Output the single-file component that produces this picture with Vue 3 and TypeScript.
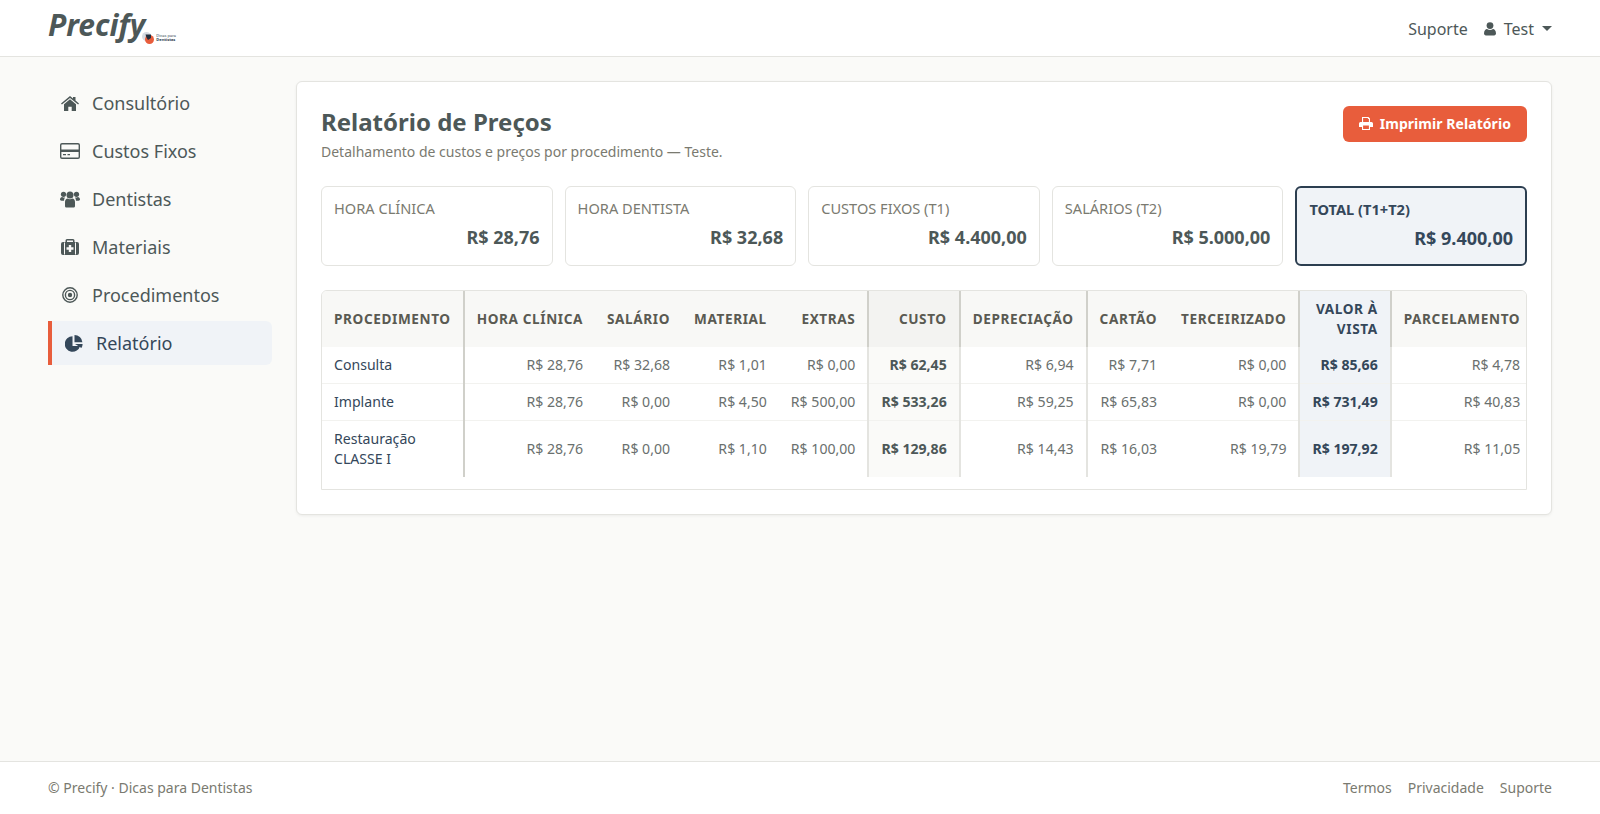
<script setup lang="ts">
interface Row {
  name: string[];
  values: string[];
}

const navItems = [
  { label: 'Consultório', icon: 'home' },
  { label: 'Custos Fixos', icon: 'card' },
  { label: 'Dentistas', icon: 'users' },
  { label: 'Materiais', icon: 'medkit' },
  { label: 'Procedimentos', icon: 'target' },
  { label: 'Relatório', icon: 'pie', active: true }
];

const stats = [
  { label: 'HORA CLÍNICA', value: 'R$ 28,76' },
  { label: 'HORA DENTISTA', value: 'R$ 32,68' },
  { label: 'CUSTOS FIXOS (T1)', value: 'R$ 4.400,00' },
  { label: 'SALÁRIOS (T2)', value: 'R$ 5.000,00' },
  { label: 'TOTAL (T1+T2)', value: 'R$ 9.400,00', total: true }
];

const rows: Row[] = [
  {
    name: ['Consulta'],
    values: ['R$ 28,76', 'R$ 32,68', 'R$ 1,01', 'R$ 0,00', 'R$ 62,45', 'R$ 6,94', 'R$ 7,71', 'R$ 0,00', 'R$ 85,66', 'R$ 4,78']
  },
  {
    name: ['Implante'],
    values: ['R$ 28,76', 'R$ 0,00', 'R$ 4,50', 'R$ 500,00', 'R$ 533,26', 'R$ 59,25', 'R$ 65,83', 'R$ 0,00', 'R$ 731,49', 'R$ 40,83']
  },
  {
    name: ['Restauração', 'CLASSE I'],
    values: ['R$ 28,76', 'R$ 0,00', 'R$ 1,10', 'R$ 100,00', 'R$ 129,86', 'R$ 14,43', 'R$ 16,03', 'R$ 19,79', 'R$ 197,92', 'R$ 11,05']
  }
];

const columns = ['HORA CLÍNICA', 'SALÁRIO', 'MATERIAL', 'EXTRAS', 'CUSTO', 'DEPRECIAÇÃO', 'CARTÃO', 'TERCEIRIZADO', 'VALOR À VISTA', 'PARCELAMENTO'];

// Per-column classes, index matches columns/values
const colClass = ['', '', '', '', 'col-cost', 'col-dep', 'col-card', '', 'col-cash', 'col-inst'];
</script>

<template>
  <div class="page">
    <header class="navbar">
      <div class="brand">
        <span class="brand-name">Precify</span>
        <span class="brand-sub">
          <svg class="brand-mark" viewBox="0 0 12 12">
            <circle cx="4.500" cy="4.500" r="4.500" fill="#d5dbe3" />
            <circle cx="7.500" cy="7.500" r="4.500" fill="#e85d3c" />
            <path d="M3.500 2.500h5.500v3.500L6 8 4.500 5.500z" fill="#1f2d3d" />
          </svg>
          <span class="brand-sub-text"><span>Dicas para</span><b>Dentistas</b></span>
        </span>
      </div>
      <nav class="top-links">
        <a>Suporte</a>
        <a class="user">
          <svg class="user-icon" viewBox="0 0 12 14">
            <circle cx="6" cy="3.600" r="3.400" fill="currentColor" />
            <path d="M0 11.600C0 8.600 1.600 7 3 7c.9.600 1.900 1 3 1s2.100-.4 3-1c1.400 0 3 1.600 3 4.600 0 1.100-.8 1.900-1.900 1.900H1.900C.8 13.500 0 12.700 0 11.600z" fill="currentColor" />
          </svg>
          Test
          <span class="caret"></span>
        </a>
      </nav>
    </header>

    <div class="layout">
      <aside class="sidebar">
        <a v-for="item in navItems" :key="item.label" class="nav-item" :class="{ active: item.active }">
          <span class="nav-icon">
            <svg v-if="item.icon === 'home'" viewBox="0 0 18 15" width="18" height="15">
              <path d="M9 0l3 2.500V1h2.500v3.600L18 7.500l-.9 1L9 1.900.9 8.500 0 7.500z" fill="currentColor" />
              <path d="M9 3.300l6 5V15h-4.300v-4.300H7.300V15H3V8.300z" fill="currentColor" />
            </svg>
            <svg v-else-if="item.icon === 'card'" viewBox="0 0 20 16" width="20" height="16">
              <path fill-rule="evenodd" d="M2 0h16a2 2 0 0 1 2 2v12a2 2 0 0 1-2 2H2a2 2 0 0 1-2-2V2a2 2 0 0 1 2-2zm-.6 2v4.400h17.200V2a.6.600 0 0 0-.6-.6H2a.6.600 0 0 0-.6.6zm0 7v5c0 .3.300.6.600.6h16c.3 0 .6-.3.600-.6V9zM3 11h3v1.300H3zm4.500 0h2.500v1.300H7.500z" fill="currentColor" />
            </svg>
            <svg v-else-if="item.icon === 'users'" viewBox="0 0 20 17" width="20" height="17">
              <circle cx="3.500" cy="3.300" r="2.600" fill="currentColor" />
              <circle cx="16.500" cy="3.300" r="2.600" fill="currentColor" />
              <circle cx="10" cy="4" r="3.500" fill="currentColor" />
              <path d="M0 8.600C0 7 1 6 2.200 6c.9.500 1.700.7 2.800.5-.6.900-1 1.900-1 3.200H1.500C.6 9.700 0 9.300 0 8.600zM20 8.600C20 7 19 6 17.800 6c-.9.500-1.700.7-2.800.5.600.9 1 1.900 1 3.200h2.500c.9 0 1.500-.4 1.500-1.100z" fill="currentColor" />
              <path d="M5 11c0-2 1.300-3.400 2.500-3.400 1.600 1 3.400 1 5 0C13.700 7.600 15 9 15 11v4c0 1-.7 1.600-1.700 1.600H6.700C5.700 16.600 5 16 5 15z" fill="currentColor" />
            </svg>
            <svg v-else-if="item.icon === 'medkit'" viewBox="0 0 18 16" width="18" height="16">
              <path fill-rule="evenodd" d="M6 0h6a1.500 1.500 0 0 1 1.500 1.500V3H16a2 2 0 0 1 2 2v9a2 2 0 0 1-2 2H2a2 2 0 0 1-2-2V5a2 2 0 0 1 2-2h2.500V1.500A1.500 1.500 0 0 1 6 0zm0 1.500V3h6V1.500zM3 3.600v11.800h1V3.600zm11 0v11.800h1V3.600zM7.800 6v2.300H5.500v2.400h2.300V13h2.400v-2.300h2.300V8.300h-2.300V6z" fill="currentColor" />
            </svg>
            <svg v-else-if="item.icon === 'target'" viewBox="0 0 16 16" width="16" height="16">
              <circle cx="8" cy="8" r="7.200" fill="none" stroke="currentColor" stroke-width="1.400" />
              <circle cx="8" cy="8" r="4.600" fill="none" stroke="currentColor" stroke-width="1.400" />
              <circle cx="8" cy="8" r="2.200" fill="currentColor" />
            </svg>
            <svg v-else viewBox="0 0 18 17" width="18" height="17">
              <path d="M7.500 1.200a7.800 7.800 0 1 0 7.600 9.800H7.500z" fill="currentColor" />
              <path d="M9.500 0a8 8 0 0 1 7.900 7.200H9.500z" fill="currentColor" />
              <path d="M10 9h7.600a8 8 0 0 1-1.200 4.100z" fill="currentColor" />
            </svg>
          </span>
          <span>{{ item.label }}</span>
        </a>
      </aside>

      <main class="card">
        <div class="card-head">
          <div>
            <h1>Relatório de Preços</h1>
            <p>Detalhamento de custos e preços por procedimento — Teste.</p>
          </div>
          <button class="print-btn">
            <svg viewBox="0 0 14 13" width="14" height="13">
              <path fill-rule="evenodd" d="M3 0h6.500L11 1.500V5h1.500A1.500 1.500 0 0 1 14 6.500V10h-3v3H3v-3H0V6.500A1.500 1.500 0 0 1 1.500 5H3zm1.100 1.100V5h5.800V2H8.900V1.100zM4.100 8.500v3.400h5.800V8.500z" fill="currentColor" />
            </svg>
            Imprimir Relatório
          </button>
        </div>

        <div class="stats">
          <div v-for="stat in stats" :key="stat.label" class="stat" :class="{ total: stat.total }">
            <div class="stat-label">{{ stat.label }}</div>
            <div class="stat-value">{{ stat.value }}</div>
          </div>
        </div>

        <div class="table-wrap">
          <table>
            <thead>
              <tr>
                <th class="col-name">PROCEDIMENTO</th>
                <th v-for="(col, i) in columns" :key="col" :class="colClass[i]">{{ col }}</th>
              </tr>
            </thead>
            <tbody>
              <tr v-for="row in rows" :key="row.name[0]">
                <td class="col-name">
                  <template v-for="(part, p) in row.name" :key="part"><br v-if="p > 0" />{{ part }}</template>
                </td>
                <td v-for="(val, i) in row.values" :key="i" :class="colClass[i]">{{ val }}</td>
              </tr>
            </tbody>
          </table>
        </div>
      </main>
    </div>

    <footer class="footer">
      <span>© Precify · Dicas para Dentistas</span>
      <div class="footer-links">
        <a>Termos</a>
        <a>Privacidade</a>
        <a>Suporte</a>
      </div>
    </footer>
  </div>
</template>

<style>
body {
  margin: 0;
  background: #fafaf8;
}
</style>

<style scoped>
.page {
  min-height: 814px;
  display: flex;
  flex-direction: column;
  font-family: "Noto Sans", "Open Sans", sans-serif;
  color: #4d5858;
  background: #fafaf8;
}

.navbar {
  height: 56px;
  flex-shrink: 0;
  display: flex;
  align-items: center;
  justify-content: space-between;
  padding: 0 48px;
  background: #fff;
  border-bottom: 1px solid #e4e4e0;
}

.brand {
  display: flex;
  align-items: flex-start;
  height: 56px;
}

.brand-name {
  margin-top: 5px;
  font-size: 30px;
  line-height: 40px;
  font-weight: 700;
  font-style: italic;
  color: #4d5858;
}

.brand-sub {
  display: flex;
  align-items: center;
  margin-top: 32px;
  margin-left: -3px;
}

.brand-mark {
  width: 12px;
  height: 12px;
}

.brand-sub-text {
  display: flex;
  flex-direction: column;
  font-size: 4px;
  line-height: 4px;
  color: #2c3e50;
  margin-left: 2px;
}

.top-links {
  display: flex;
  align-items: center;
  gap: 16px;
  padding-top: 1px;
  font-size: 16px;
}

.user {
  display: flex;
  align-items: center;
}

.user-icon {
  width: 12px;
  height: 14px;
  margin-right: 8px;
}

.caret {
  width: 0;
  height: 0;
  margin-left: 8px;
  border-left: 5px solid transparent;
  border-right: 5px solid transparent;
  border-top: 5px solid #4d5858;
}

.layout {
  flex: 1;
  display: flex;
  align-items: flex-start;
  padding: 24px 48px;
  gap: 24px;
}

.sidebar {
  width: 224px;
  flex-shrink: 0;
  display: flex;
  flex-direction: column;
  gap: 4px;
}

.nav-item {
  height: 44px;
  display: flex;
  align-items: center;
  padding-left: 12px;
  font-size: 18px;
  color: #4d5858;
  border-radius: 0 6px 6px 0;
}

.nav-item.active {
  background: #f0f3f7;
  border-left: 4px solid #e85d3c;
  color: #34475a;
}

.nav-icon {
  width: 20px;
  height: 20px;
  margin-right: 12px;
  display: flex;
  align-items: center;
  justify-content: center;
}

.card {
  flex: 1;
  min-width: 0;
  padding: 24px;
  background: #fff;
  border: 1px solid #e4e4e0;
  border-radius: 6px;
  box-shadow: 0 1px 3px rgba(0, 0, 0, 0.06);
}

.card-head {
  display: flex;
  justify-content: space-between;
  align-items: flex-start;
}

h1 {
  margin: 0;
  font-size: 24px;
  line-height: 32px;
  font-weight: 700;
  color: #4d5858;
}

.card-head p {
  margin: 3px 0 0;
  font-size: 14px;
  line-height: 21px;
  color: #7a7a70;
}

.print-btn {
  display: flex;
  align-items: center;
  gap: 7px;
  height: 36px;
  padding: 0 16px 1px;
  border: 0;
  border-radius: 6px;
  background: #e85d3c;
  color: #fff;
  font: 700 14px "Noto Sans", sans-serif;
  letter-spacing: 0.06px;
}

.stats {
  display: grid;
  grid-template-columns: repeat(5, 1fr);
  gap: 12px;
  margin-top: 24px;
}

.stat {
  height: 80px;
  box-sizing: border-box;
  padding: 11px 12px;
  border: 1px solid #e4e4e0;
  border-radius: 6px;
  background: #fff;
}

.stat-label {
  font-size: 14.600px;
  line-height: 21px;
  color: #7a7a70;
}

.stat-value {
  margin-top: 5px;
  font-size: 18px;
  line-height: 27px;
  font-weight: 700;
  text-align: right;
  color: #4d5858;
}

.stat.total {
  padding: 11px 12px;
  border: 2px solid #2c3e50;
  background: #f0f3f7;
}

.stat.total .stat-label {
  font-weight: 700;
  font-size: 14.600px;
  color: #34475a;
}

.stat.total .stat-value {
  color: #34475a;
}

.table-wrap {
  margin-top: 24px;
  padding-bottom: 12px;
  border: 1px solid #e4e4e0;
  border-radius: 6px 6px 0 0;
  overflow: hidden;
}

table {
  border-collapse: collapse;
  font-size: 14.100px;
  line-height: 20px;
}

th {
  padding: 8px 12px;
  height: 56px;
  box-sizing: border-box;
  background: #f8f8f6;
  color: #5a5a52;
  font-size: 13.600px;
  font-weight: 700;
  letter-spacing: 0.6px;
  text-align: right;
  white-space: nowrap;
}

th.col-cash {
  width: 66px;
  white-space: normal;
}

td {
  padding: 8px 12px;
  text-align: right;
  color: #6a706e;
  white-space: nowrap;
  border-bottom: 1px solid #f2f2ef;
}

tbody tr:last-child td {
  border-bottom: 0;
}

th.col-name,
td.col-name {
  text-align: left;
  border-right: 2px solid #d0d0ca;
}

td.col-name {
  color: #34475a;
}

th.col-cost,
th.col-dep,
th.col-card,
th.col-cash,
th.col-inst {
  border-left: 2px solid #d0d0ca;
}

td.col-cost,
td.col-dep,
td.col-card,
td.col-cash,
td.col-inst {
  border-left: 2px solid #e4e4e0;
}

th.col-cost {
  background: #f3f3f1;
}

td.col-cost {
  background: #fafaf8;
  color: #4d5858;
  font-weight: 700;
}

th.col-cash,
td.col-cash {
  background: #f0f3f7;
  color: #34475a;
  font-weight: 700;
}

.footer {
  height: 50px;
  flex-shrink: 0;
  display: flex;
  align-items: center;
  justify-content: space-between;
  padding: 0 48px 2px;
  background: #fff;
  border-top: 1px solid #e4e4e0;
  font-size: 14px;
  color: #7a7a70;
}

.footer-links {
  display: flex;
  gap: 16px;
}
</style>
